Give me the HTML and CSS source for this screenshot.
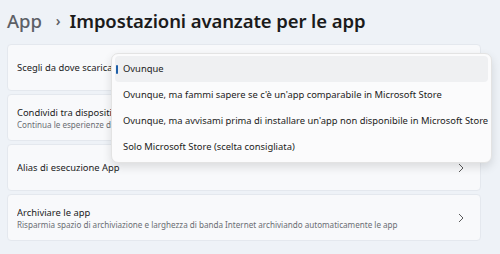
FILE: index.html
```html
<!DOCTYPE html>
<html lang="it">
<head>
    <meta charset="UTF-8">
    <meta name="viewport" content="width=device-width, initial-scale=1.0">
    <title>Impostazioni avanzate per le app</title>
    <link rel="stylesheet" href="styles.css">
</head>
<body>
    <div class="page">
        <h1 class="breadcrumb">
            <span class="crumb">App</span>
            <span class="sep">›</span>
            <span class="current">Impostazioni avanzate per le app</span>
        </h1>

        <div class="list">
            <div class="card">
                <div class="text">
                    <div class="label">Scegli da dove scaricare le app</div>
                </div>
            </div>
            <div class="card">
                <div class="text">
                    <div class="label">Condividi tra dispositivi</div>
                    <div class="desc">Continua le esperienze delle app su altri dispositivi</div>
                </div>
            </div>
            <div class="card">
                <div class="text">
                    <div class="label">Alias di esecuzione App</div>
                </div>
                <svg class="chevron" width="6" height="10" viewBox="0 0 6 10"><path d="M1 1l4 4-4 4" fill="none" stroke="#5c5c5c" stroke-width="1"/></svg>
            </div>
            <div class="card">
                <div class="text">
                    <div class="label">Archiviare le app</div>
                    <div class="desc">Risparmia spazio di archiviazione e larghezza di banda Internet archiviando automaticamente le app</div>
                </div>
                <svg class="chevron" width="6" height="10" viewBox="0 0 6 10"><path d="M1 1l4 4-4 4" fill="none" stroke="#5c5c5c" stroke-width="1"/></svg>
            </div>
        </div>

        <!-- menu aperto della combo -->
        <ul class="dropdown">
            <li class="selected">Ovunque</li>
            <li>Ovunque, ma fammi sapere se c'è un'app comparabile in Microsoft Store</li>
            <li>Ovunque, ma avvisami prima di installare un'app non disponibile in Microsoft Store</li>
            <li>Solo Microsoft Store (scelta consigliata)</li>
        </ul>
    </div>
</body>
</html>
```

FILE: styles.css
```css
body {
    margin: 0;
    background: #eef2f7;
    font-family: "Segoe UI", "Noto Sans", sans-serif;
    color: #1b1b1b;
}
.page {
    position: relative;
    padding: 0 19px 0 7px;
    height: 254px;
    box-sizing: border-box;
    overflow: hidden;
}
.breadcrumb {
    margin: 0 0 4px;
    height: 40px;
    display: flex;
    align-items: center;
    font-size: 18.5px;
    font-weight: 600;
    letter-spacing: -0.1px;
}
.crumb {
    color: #5d6066;
    font-weight: 500;
}
.sep {
    color: #5d6066;
    font-size: 14px;
    margin: 0 9px 0 14px;
}
.list {
    display: flex;
    flex-direction: column;
    gap: 3px;
}
.card {
    height: 47px;
    box-sizing: border-box;
    background: #f8f9fb;
    border: 1px solid #e4e8ee;
    border-radius: 4px;
    display: flex;
    align-items: center;
    padding: 0 16px 0 9px;
}
.text {
    flex: 1;
    white-space: nowrap;
    overflow: hidden;
}
.label {
    font-size: 9.4px;
    line-height: 13px;
}
.desc {
    font-size: 8.1px;
    line-height: 11px;
    color: #6b6e73;
}
.chevron {
    flex: none;
}
.dropdown {
    position: absolute;
    left: 111px;
    top: 53px;
    width: 381px;
    margin: 0;
    padding: 2px 3px;
    list-style: none;
    background: #fbfbfc;
    border: 1px solid #e3e3e3;
    border-radius: 7px;
    box-shadow: 0 4px 10px rgba(0, 0, 0, 0.12);
    box-sizing: border-box;
}
.dropdown li {
    position: relative;
    height: 26px;
    line-height: 26px;
    padding-left: 8px;
    font-size: 9.4px;
    white-space: nowrap;
    border-radius: 4px;
}
.dropdown li.selected {
    background: #eff0f2;
}
.dropdown li.selected::before {
    content: "";
    position: absolute;
    left: 1px;
    top: 9px;
    width: 2px;
    height: 9px;
    border-radius: 1px;
    background: #1f5fa8;
}
```
